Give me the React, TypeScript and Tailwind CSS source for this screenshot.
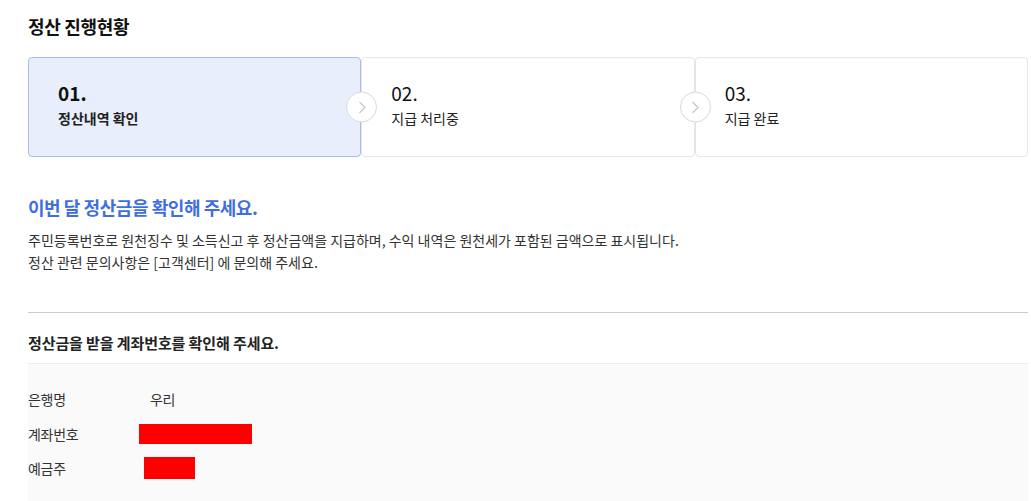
import React from "react";

function Arrow() {
  return (
    <div className="absolute left-[-16px] top-1/2 -translate-y-1/2 w-[31px] h-[31px] rounded-full bg-white border border-[#d9d9d9] flex items-center justify-center z-10">
      <svg width="10" height="18" viewBox="0 0 10 18" fill="none">
        <path d="M2.5 3.5l5.5 5.5-5.5 5.5" stroke="#c4c4c4" strokeWidth="1.1" />
      </svg>
    </div>
  );
}

export default function App() {
  const steps = [
    { n: "01.", t: "정산내역 확인", active: true },
    { n: "02.", t: "지급 처리중", active: false },
    { n: "03.", t: "지급 완료", active: false },
  ];
  return (
    <div className="w-[1031px] min-h-[501px] bg-white text-[#222] font-['Noto_Sans_CJK_KR',sans-serif]">
      <div className="pl-[28px] pr-[3px]">
        <h2 className="pt-[14px] text-[18px] font-bold leading-[24px] tracking-[-0.3px] text-[#111]">정산 진행현황</h2>
        <div className="mt-[19px] flex h-[100px]">
          {steps.map((s, i) => (
            <div
              key={i}
              className={
                s.active
                  ? "relative flex-1 rounded-[4px] border border-[#a5bdf0] bg-[#e8eefb] pl-[29px] pt-[22px]"
                  : "relative flex-1 rounded-[4px] border border-[#e6e6e6] bg-white pl-[29px] pt-[22px]"
              }
            >
              {i > 0 && <Arrow />}
              <div className={s.active ? "text-[19px] font-bold leading-[26px] text-[#111]" : "text-[19px] leading-[26px] text-[#111]"}>{s.n}</div>
              <div className={s.active ? "mt-[2px] text-[14px] font-bold leading-[20px] text-[#222]" : "mt-[2px] text-[14px] leading-[20px] text-[#222]"}>{s.t}</div>
            </div>
          ))}
        </div>
        <h3 className="mt-[36px] text-[18px] font-bold leading-[28px] tracking-[-0.45px] text-[#3f6fdf]">이번 달 정산금을 확인해 주세요.</h3>
        <p className="mt-[8px] text-[14px] leading-[22px] text-[#333]">
          주민등록번호로 원천징수 및 소득신고 후 정산금액을 지급하며, 수익 내역은 원천세가 포함된 금액으로 표시됩니다.
          <br />
          정산 관련 문의사항은 [고객센터] 에 문의해 주세요.
        </p>
        <div className="mt-[39px] border-t border-[#cccccc]" />
        <div className="pt-[20px] pb-[10px] text-[15px] font-bold leading-[20px] tracking-[-0.1px] text-[#222]">정산금을 받을 계좌번호를 확인해 주세요.</div>
        <div className="border-t border-[#ececec] bg-[#fafafa] pt-[25px] pb-[31px] text-[14px] tracking-[-0.3px] text-[#333]">
          <div className="flex items-center h-[20px]">
            <span className="w-[122px]">은행명</span>
            <span>우리</span>
          </div>
          <div className="flex items-center h-[20px] mt-[15px]">
            <span className="w-[111px]">계좌번호</span>
            <span className="w-[113px] h-[20px] bg-[#ff0000]" />
          </div>
          <div className="flex items-center h-[22px] mt-[13px]">
            <span className="w-[116px]">예금주</span>
            <span className="w-[51px] h-[22px] bg-[#ff0000]" />
          </div>
        </div>
      </div>
    </div>
  );
}
